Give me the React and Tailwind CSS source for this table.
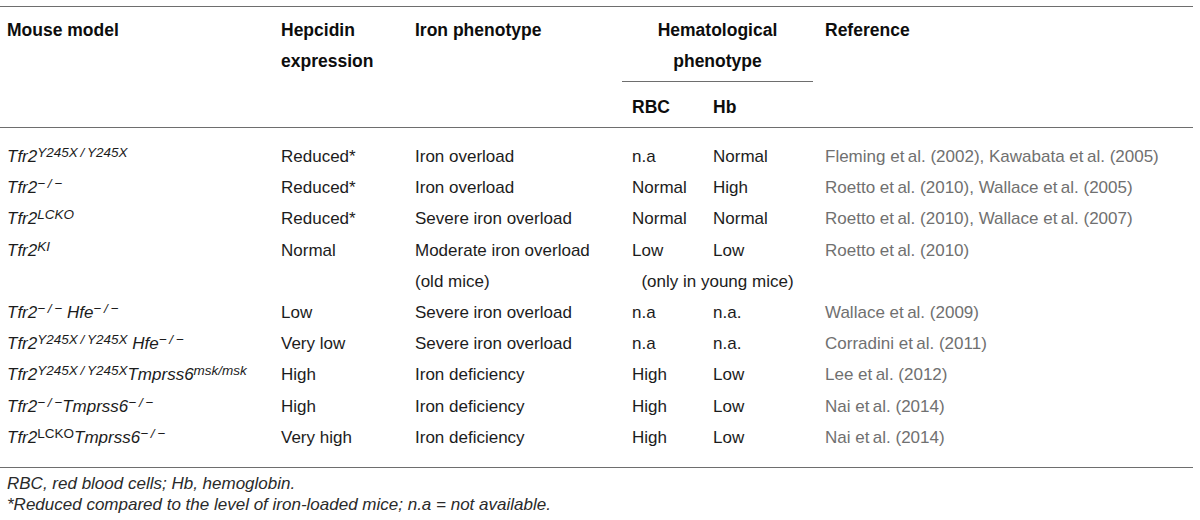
import React from "react";

const COLS = "grid grid-cols-[274px_134px_217px_81px_112px_1fr]";

function Sup({ children, upright }) {
  return (
    <span className={`text-[13.5px] leading-none align-[5px] ${upright ? "not-italic" : "italic"}`}>
      {children}
    </span>
  );
}

const NEG = "\u2212\u2009/\u2009\u2212";
const Y = "Y245X\u2009/\u2009Y245X";

const rows = [
  {
    model: (<><span>Tfr2</span><Sup>{Y}</Sup></>),
    hep: "Reduced*",
    iron: "Iron overload",
    rbc: "n.a",
    hb: "Normal",
    ref: "Fleming et\u2009al. (2002), Kawabata et\u2009al. (2005)",
  },
  {
    model: (<><span>Tfr2</span><Sup>{NEG}</Sup></>),
    hep: "Reduced*",
    iron: "Iron overload",
    rbc: "Normal",
    hb: "High",
    ref: "Roetto et\u2009al. (2010), Wallace et\u2009al. (2005)",
  },
  {
    model: (<><span>Tfr2</span><Sup>LCKO</Sup></>),
    hep: "Reduced*",
    iron: "Severe iron overload",
    rbc: "Normal",
    hb: "Normal",
    ref: "Roetto et\u2009al. (2010), Wallace et\u2009al. (2007)",
  },
  {
    model: (<><span>Tfr2</span><Sup>KI</Sup></>),
    hep: "Normal",
    iron: "Moderate iron overload",
    iron2: "(old mice)",
    rbc: "Low",
    hb: "Low",
    hema2: "(only in young mice)",
    ref: "Roetto et\u2009al. (2010)",
  },
  {
    model: (<><span>Tfr2</span><Sup>{NEG}</Sup><span> Hfe</span><Sup>{NEG}</Sup></>),
    hep: "Low",
    iron: "Severe iron overload",
    rbc: "n.a",
    hb: "n.a.",
    ref: "Wallace et\u2009al. (2009)",
  },
  {
    model: (<><span>Tfr2</span><Sup>{Y}</Sup><span> Hfe</span><Sup>{NEG}</Sup></>),
    hep: "Very low",
    iron: "Severe iron overload",
    rbc: "n.a",
    hb: "n.a.",
    ref: "Corradini et\u2009al. (2011)",
  },
  {
    model: (<><span>Tfr2</span><Sup>{Y}</Sup><span>Tmprss6</span><Sup>msk/msk</Sup></>),
    hep: "High",
    iron: "Iron deficiency",
    rbc: "High",
    hb: "Low",
    ref: "Lee et\u2009al. (2012)",
  },
  {
    model: (<><span>Tfr2</span><Sup>{NEG}</Sup><span>Tmprss6</span><Sup>{NEG}</Sup></>),
    hep: "High",
    iron: "Iron deficiency",
    rbc: "High",
    hb: "Low",
    ref: "Nai et\u2009al. (2014)",
  },
  {
    model: (<><span>Tfr2</span><Sup upright>LCKO</Sup><span>Tmprss6</span><Sup>{NEG}</Sup></>),
    hep: "Very high",
    iron: "Iron deficiency",
    rbc: "High",
    hb: "Low",
    ref: "Nai et\u2009al. (2014)",
  },
];

export default function App() {
  return (
    <div className="w-[1200px] h-[520px] bg-white overflow-hidden font-['Liberation_Sans',Arial,sans-serif] text-[#1c1c1c]">
      <div className="w-[1193px] pt-[6px]">
        <div className="h-px bg-[#6e6e6e]" />
        {/* header */}
        <div className={`${COLS} pl-[7px] pt-[8px] pb-[4px] text-[17.5px] font-bold leading-[31px] text-[#0d0d0d]`}>
          <div>Mouse model</div>
          <div>
            <div>Hepcidin</div>
            <div>expression</div>
          </div>
          <div>Iron phenotype</div>
          <div className="col-span-2 flex flex-col">
            <div className="-ml-[10px] mr-[12px]">
              <div className="text-center">Hematological</div>
              <div className="text-center">phenotype</div>
              <div className="mt-[4px] h-px bg-[#6e6e6e]" />
            </div>
            <div className="flex pt-[10px]">
              <div className="w-[81px]">RBC</div>
              <div>Hb</div>
            </div>
          </div>
          <div>Reference</div>
        </div>
        <div className="h-px bg-[#6e6e6e]" />
        {/* body */}
        <div className="pl-[7px] pt-[13px] pb-[14px] text-[17px] leading-[31.2px]">
          {rows.map((r, i) => (
            <div key={i} className={COLS}>
              <div className="italic whitespace-nowrap">{r.model}</div>
              <div>{r.hep}</div>
              <div>
                <div>{r.iron}</div>
                {r.iron2 && <div>{r.iron2}</div>}
              </div>
              <div className="col-span-2 flex flex-col">
                <div className="flex">
                  <div className="w-[81px]">{r.rbc}</div>
                  <div>{r.hb}</div>
                </div>
                {r.hema2 && (
                  <div className="-ml-[10px] mr-[12px] text-center">{r.hema2}</div>
                )}
              </div>
              <div className="text-[#707070] whitespace-nowrap">{r.ref}</div>
            </div>
          ))}
        </div>
        <div className="h-px bg-[#6e6e6e]" />
        <div className="pl-[7px] pt-[5px] italic text-[17px] leading-[21px] text-[#2a2a2a]">
          <div>RBC, red blood cells; Hb, hemoglobin.</div>
          <div>*Reduced compared to the level of iron-loaded mice; n.a = not available.</div>
        </div>
      </div>
    </div>
  );
}
